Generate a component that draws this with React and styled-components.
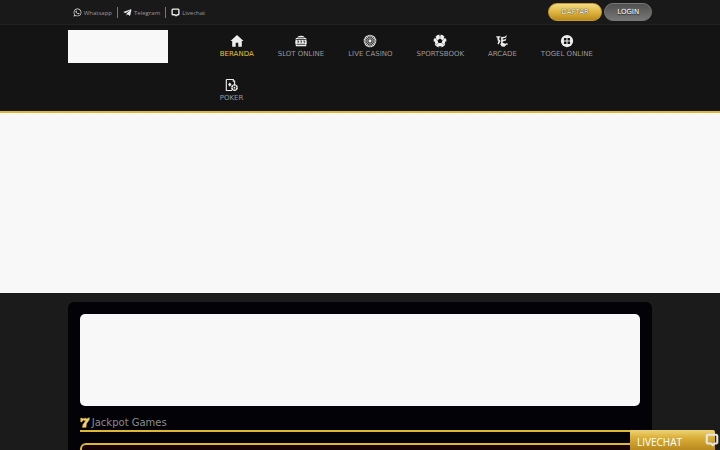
import React from "react";
import styled, { createGlobalStyle } from "styled-components";
import { FaWhatsapp, FaTelegramPlane } from "react-icons/fa";

const GlobalStyle = createGlobalStyle`
  * {
    box-sizing: border-box;
  }

  body {
    margin: 0;
    background: #1b1b1b;
    color: #9a9a9a;
    font-family: "DejaVu Sans", Verdana, sans-serif;
    overflow: hidden;
  }
`;

const Page = styled.div`
  height: 100vh;
  overflow: hidden;
`;

const Container = styled.div`
  display: flex;
  width: 82%;
  max-width: 1170px;
  margin: 0 auto;
  padding: 0 3px;
`;

const TopBar = styled.div`
  background: #191919;
  border-bottom: 1px solid #222222;
`;

const TopContent = styled(Container)`
  justify-content: space-between;
  align-items: center;
  height: 24px;
`;

const ContactList = styled.ul`
  display: flex;
  margin: 0;
  padding: 1px 0 0;
  list-style: none;
`;

const ContactItem = styled.li`
  padding: 0 5px;
  border-left: 1px solid #777777;

  &:first-child {
    border-left: none;
  }
`;

const ContactLink = styled.a`
  display: flex;
  align-items: center;
  gap: 2px;
  height: 11px;
  color: #999999;
  font-family: "Open Sans", sans-serif;
  font-size: 6px;
  text-decoration: none;

  svg {
    width: 9px;
    height: 9px;
    color: #eeeeee;
  }
`;

const Actions = styled.div`
  display: flex;
  gap: 2px;
`;

const PillButton = styled.button`
  width: ${(props) => props.$width}px;
  height: 18px;
  padding: 0;
  border: 1px solid ${(props) => (props.$gold ? "#c99a2e" : "#777777")};
  border-radius: 9px;
  background: ${(props) =>
    props.$gold
      ? "linear-gradient(#f3dc83, #e0b640 50%, #b98a1c)"
      : "linear-gradient(#505050, #777777)"};
  color: #ffffff;
  font-family: inherit;
  font-size: 7px;
  text-shadow: ${(props) => (props.$gold ? "0 0 1px #4b3500, 0 0 1px #4b3500" : "0 1px 1px #222222")};
`;

const Header = styled.header`
  background: #141414;
  border-bottom: 2px solid #dcb834;
`;

const HeaderContent = styled(Container)`
  align-items: flex-start;
  padding-top: 5px;
`;

const Brand = styled.a`
  flex: none;
  width: 100px;
  height: 33px;
  background: #f8f8f8;
`;

const Nav = styled.nav`
  flex: 1;
  padding-left: 40px;
`;

const Menu = styled.ul`
  display: flex;
  flex-wrap: wrap;
  row-gap: 7px;
  margin: 0;
  padding: 0;
  list-style: none;
`;

const MenuItem = styled.li`
  padding: 0 12px;
`;

const MenuLink = styled.a`
  display: flex;
  flex-direction: column;
  align-items: center;
  height: 37px;
  padding-top: 4px;
  color: ${(props) => (props.$active ? "#e6c136" : "#999999")};
  font-size: 7px;
  line-height: 12px;
  text-decoration: none;

  svg {
    width: 14px;
    height: 14px;
    color: #eeeeee;
  }
`;

const Banner = styled.section`
  height: 40vh;
  background: #f8f8f8;
`;

const Main = styled.main`
  width: calc(82% - 6px);
  max-width: 1170px;
  margin: 9px auto 0;
  padding: 12px;
  border-radius: 6px;
  background: #020207;
`;

const Promo = styled.section`
  height: 92px;
  border-radius: 5px;
  background: #f8f8f8;
`;

const SectionTitle = styled.h2`
  display: flex;
  align-items: center;
  gap: 2px;
  height: 18px;
  margin: 8px 0 11px;
  border-bottom: 2px solid #dcb834;
  color: #8c8c8c;
  font-size: 10px;
  font-weight: 400;

  svg {
    width: 10px;
    height: 11px;
  }
`;

const JackpotBox = styled.div`
  height: 80px;
  border: 2px solid #dcb834;
  border-radius: 6px;
  background: #180404;
`;

const LiveChat = styled.a`
  position: fixed;
  right: 5px;
  bottom: 0;
  display: flex;
  align-items: center;
  width: 85px;
  height: 20px;
  padding: 4px 0 0 7px;
  border-radius: 0 2px 0 0;
  background: linear-gradient(#eed477, #d9ae37 40%, #b8891f);
  color: #ffffff;
  font-family: "Open Sans", sans-serif;
  font-size: 10px;
  text-decoration: none;

  svg {
    position: absolute;
    top: 3px;
    right: -4px;
    width: 14px;
    height: 14px;
    color: #e6e6e6;
  }
`;

const ChatIcon = () => (
  <svg viewBox="0 0 16 16" fill="none" stroke="currentColor" strokeWidth="2.4" strokeLinejoin="round">
    <path d="M3 2h10l1 1v8l-1 1h-2l-2 2-2-2H3l-1-1V3z" />
  </svg>
);

const HomeIcon = () => (
  <svg viewBox="0 0 16 16" fill="currentColor">
    <path d="M8 1 .5 8h2v6.5H6.5V10h3v4.5h4V8h2z" />
  </svg>
);

const SlotIcon = () => (
  <svg viewBox="0 0 16 16">
    <path d="M4 4.5C4 3 5 2 8 2s4 1 4 2.5h2v3h.5v4H14v2.5H2v-2.5h-.5v-4H2v-3z" fill="currentColor" />
    <path d="M4.5 4.3h7M2.5 6.3h11M3 11.8h10" stroke="#141414" strokeWidth=".9" />
    <path d="M3.5 8h2l-1 2.5M7 8h2l-1 2.5M10.5 8h2l-1 2.5" fill="none" stroke="#141414" strokeWidth=".8" />
  </svg>
);

const WheelIcon = () => (
  <svg viewBox="0 0 16 16">
    <circle cx="8" cy="8" r="7.2" fill="#e8e8e8" />
    <circle cx="8" cy="8" r="4.4" fill="none" stroke="#222222" strokeWidth=".5" />
    <path
      d="M8 1v14M1 8h14M3 3l10 10M13 3 3 13M5.3 1.6l5.4 12.8M10.7 1.6 5.3 14.4M1.6 5.3l12.8 5.4M1.6 10.7l12.8-5.4"
      stroke="#141414"
      strokeWidth=".8"
    />
    <circle cx="8" cy="8" r="1.6" fill="#e8e8e8" />
  </svg>
);

const BallIcon = () => (
  <svg viewBox="0 0 16 16">
    <circle cx="8" cy="8" r="7.3" fill="currentColor" />
    <path
      d="m8 5.2 2.8 2-1 3.2H6.2l-1-3.2zM6.3.5h3.4L8 2.2zM.5 8l1.6.8.5 2.8-1.3.4zM15.5 8l-1.6.8-.5 2.8 1.3.4zM6.2 14h3.6l-.5 1.6H6.7zM2.2 2.3l1.6 1-.8 1.6-1.8.1zM13.8 2.3l-1.6 1 .8 1.6 1.8.1z"
      fill="#141414"
    />
    <path d="M8 2v3M5.2 7.2 2.8 5M10.8 7.2 13.2 5M6.2 10.4l-3 2M9.8 10.4l3 2" stroke="#141414" strokeWidth=".4" />
  </svg>
);

const ArcadeIcon = () => (
  <svg viewBox="0 0 16 16" fill="currentColor">
    <path d="M1.5 2.5h5L6 4H5v2.5L6.5 8 4 12 2.8 11 4 8 2.8 7V4H1.5z" />
    <path d="M7 3.5 11 3l2.5-2-.8 3L8.8 5.2v1.5l3-.7L13 4.8l-.6 2.7-3.6 1v1.6l3 .9 2.2-.6.6 2.4-1.3-.7-2.5 2.4-3-.3L6 12l1-2z" />
  </svg>
);

const TogelIcon = () => (
  <svg viewBox="0 0 16 16">
    <circle cx="8" cy="8" r="7" fill="currentColor" />
    <path
      d="M5 4.5h2.4v2.9H4.5V5zM8.6 4.5H11l.5.5v2.4H8.6zM4.5 8.6h2.9v2.9H5l-.5-.5zM8.6 8.6h2.9V11l-.5.5H8.6z"
      fill="#141414"
    />
  </svg>
);

const PokerIcon = () => (
  <svg viewBox="0 0 16 16">
    <path d="M1.5 1.7h8v1.8H11V8M8 14.3H1.5V1.7" fill="none" stroke="currentColor" strokeWidth="1.3" />
    <path d="m5.5 5 2 2.5-2 2.5-2-2.5z" fill="currentColor" />
    <circle cx="10.8" cy="11" r="3" fill="#141414" stroke="currentColor" strokeWidth="1.9" strokeDasharray="2.7 .4" />
    <circle cx="10.8" cy="11" r="1" fill="currentColor" />
  </svg>
);

const SevenIcon = () => (
  <svg viewBox="0 0 18 20">
    <path d="M1 2h3l1 1 5-1 2 1 5-2v4l-5 7-1 7H4l1-5 5-7-4-1-3 3H1z" fill="#efd675" stroke="#b48322" />
  </svg>
);

const contacts = [
  { label: "Whatsapp", icon: FaWhatsapp },
  { label: "Telegram", icon: FaTelegramPlane },
  { label: "Livechat", icon: ChatIcon },
];

const menu = [
  { label: "BERANDA", icon: HomeIcon, active: true },
  { label: "SLOT ONLINE", icon: SlotIcon },
  { label: "LIVE CASINO", icon: WheelIcon },
  { label: "SPORTSBOOK", icon: BallIcon },
  { label: "ARCADE", icon: ArcadeIcon },
  { label: "TOGEL ONLINE", icon: TogelIcon },
  { label: "POKER", icon: PokerIcon },
];

const App = () => {
  return (
    <Page>
      <GlobalStyle />
      <TopBar>
        <TopContent>
          <ContactList>
            {contacts.map(({ label, icon: Icon }) => (
              <ContactItem key={label}>
                <ContactLink href="#">
                  <Icon />
                  {label}
                </ContactLink>
              </ContactItem>
            ))}
          </ContactList>
          <Actions>
            <PillButton type="button" $gold $width={54}>DAFTAR</PillButton>
            <PillButton type="button" $width={48}>LOGIN</PillButton>
          </Actions>
        </TopContent>
      </TopBar>

      <Header>
        <HeaderContent>
          <Brand href="#" aria-label="Home" />
          <Nav>
            <Menu>
              {menu.map(({ label, icon: Icon, active }) => (
                <MenuItem key={label}>
                  <MenuLink href="#" $active={active}>
                    <Icon />
                    {label}
                  </MenuLink>
                </MenuItem>
              ))}
            </Menu>
          </Nav>
        </HeaderContent>
      </Header>

      <Banner />

      <Main>
        <Promo />
        <SectionTitle>
          <SevenIcon />
          Jackpot Games
        </SectionTitle>
        <JackpotBox />
      </Main>

      <LiveChat href="#">
        LIVECHAT
        <ChatIcon />
      </LiveChat>
    </Page>
  );
};

export default App;
